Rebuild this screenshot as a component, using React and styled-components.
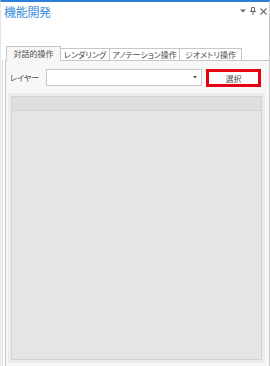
import React from "react";
import styled, { createGlobalStyle } from "styled-components";

const Global = createGlobalStyle`
  html, body { margin: 0; padding: 0; background: #fff; }
  body { font-family: "Noto Sans CJK JP", "Noto Sans", sans-serif; }
`;

const Window = styled.div`
  width: 270px;
  height: 366px;
  box-sizing: border-box;
  border-top: 2px solid #2b7fd4;
  border-right: 1px solid #c9c9c9;
  border-left: 1px solid #e6e6e6;
  background: #fff;
  display: flex;
  flex-direction: column;
  overflow: hidden;
`;

const Header = styled.div`
  display: flex;
  align-items: flex-start;
  justify-content: space-between;
  padding: 3px 2px 0 3px;
  height: 44px;
  box-sizing: border-box;
`;

const Title = styled.div`
  color: #3d8fdc;
  font-size: 12px;
  line-height: 14px;
  letter-spacing: -0.3px;
`;

const Controls = styled.div`
  display: flex;
  gap: 4px;
  align-items: center;
  padding-top: 2px;
  color: #6b6b6b;
`;

const Tabs = styled.div`
  display: flex;
  align-items: flex-end;
  padding-left: 5px;
  height: 14px;
  position: relative;
  z-index: 1;
`;

const Tab = styled.div`
  width: ${(p) => p.$w}px;
  height: ${(p) => (p.$active ? 15 : 12)}px;
  margin-bottom: ${(p) => (p.$active ? -1 : 0)}px;
  box-sizing: border-box;
  border: 1px solid #c7c7c7;
  border-bottom: none;
  margin-left: ${(p) => (p.$first ? 0 : -1)}px;
  background: ${(p) => (p.$active ? "#f7f7f7" : "#ffffff")};
  color: #4a4a4a;
  font-size: 8px;
  line-height: ${(p) => (p.$active ? 13 : 11)}px;
  text-align: center;
  font-feature-settings: "palt" 1;
  white-space: nowrap;
`;

const Panel = styled.div`
  flex: 1;
  margin-left: 4px;
  border: 1px solid #c7c7c7;
  border-right: none;
  border-bottom: none;
  box-shadow: -2px 0 0 #fff, -3px 0 0 #d6d6d6;
  background: #f7f7f7;
  display: flex;
  flex-direction: column;
  padding: 8px 4px 3px 2px;
  box-sizing: border-box;
`;

const LayerRow = styled.div`
  display: flex;
  align-items: flex-start;
  padding-left: 2px;
  height: 18px;
`;

const Label = styled.div`
  width: 36px;
  font-size: 8px;
  line-height: 17px;
  color: #4a4a4a;
  font-feature-settings: "palt" 1;
`;

const Combo = styled.div`
  width: 156px;
  height: 17px;
  box-sizing: border-box;
  border: 1px solid #c8c8c8;
  background: #fff;
  display: flex;
  align-items: center;
  justify-content: flex-end;
  padding-right: 4px;
`;

const SelectButton = styled.div`
  margin-left: 4px;
  width: 55px;
  height: 18px;
  box-sizing: border-box;
  border: 3px solid #e60012;
  background: #fdfdfd;
  font-size: 8px;
  color: #555;
  display: flex;
  align-items: center;
  justify-content: center;
`;

const GridFrame = styled.div`
  flex: 1;
  margin-top: 6px;
  background: #ececec;
  padding: 3px;
  display: flex;
`;

const Grid = styled.div`
  flex: 1;
  border: 1px solid #d3d3d3;
  background: #e5e5e5;
  display: flex;
  flex-direction: column;
`;

const GridHeader = styled.div`
  height: 13px;
  background: #dfdfdf;
  border-bottom: 1px solid #d3d3d3;
`;

export default function App() {
  return (
    <>
      <Global />
      <Window>
        <Header>
          <Title>機能開発</Title>
          <Controls>
            <svg width="6" height="4" viewBox="0 0 6 4">
              <path d="M0 0.5 L6 0.5 L3 3.5 Z" fill="#6b6b6b" />
            </svg>
            <svg width="6" height="8" viewBox="0 0 6 8">
              <path d="M1.5 0.5 H4.5 V4.5 H1.5 Z M0 4.5 H6 M3 4.5 V8" stroke="#6b6b6b" strokeWidth="1" fill="none" />
            </svg>
            <svg width="7" height="7" viewBox="0 0 7 7">
              <path d="M0.5 0.5 L6.5 6.5 M6.5 0.5 L0.5 6.5" stroke="#6b6b6b" strokeWidth="1.1" />
            </svg>
          </Controls>
        </Header>
        <Tabs>
          <Tab $w={55} $active $first>対話的操作</Tab>
          <Tab $w={50}>レンダリング</Tab>
          <Tab $w={71}>アノテーション操作</Tab>
          <Tab $w={63}>ジオメトリ操作</Tab>
        </Tabs>
        <Panel>
          <LayerRow>
            <Label>レイヤー</Label>
            <Combo>
              <svg width="4" height="3" viewBox="0 0 4 3">
                <path d="M0 0 L4 0 L2 2.5 Z" fill="#555" />
              </svg>
            </Combo>
            <SelectButton>選択</SelectButton>
          </LayerRow>
          <GridFrame>
            <Grid>
              <GridHeader />
            </Grid>
          </GridFrame>
        </Panel>
      </Window>
    </>
  );
}
